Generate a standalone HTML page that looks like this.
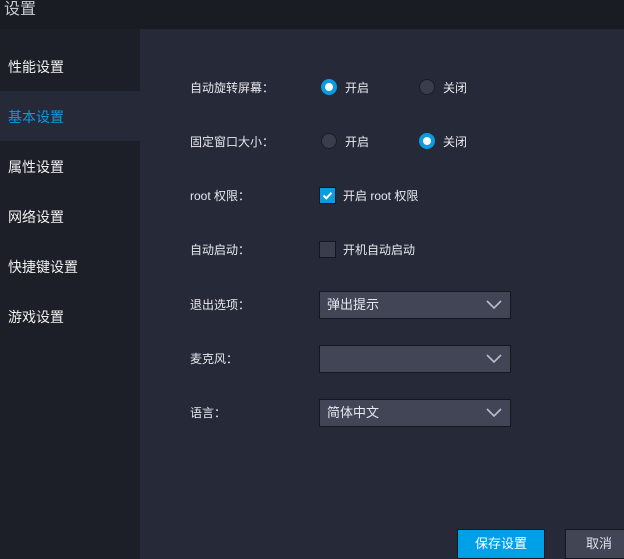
<!DOCTYPE html>
<html><head><meta charset="utf-8"><style>
body{margin:0;width:624px;height:559px;overflow:hidden;background:#262a38;font-family:"Liberation Sans","Noto Sans CJK SC",sans-serif;color:#e6e8ee;font-size:13px;position:relative}
.hdr{position:absolute;left:0;top:0;width:624px;height:29px;background:#1a1c24;color:#c8cad2;font-size:16px;line-height:20px;padding-left:4px;box-sizing:border-box}
.side{position:absolute;left:0;top:29px;width:140px;height:530px;background:#1d1f28}
.item{position:absolute;left:8px;font-size:14px;color:#f0f0f0}
.act{position:absolute;left:0;top:91px;width:140px;height:50px;background:#262a38}
.a{position:absolute;font-size:12px;color:#e8e8ee}
.r{position:absolute;width:16px;height:16px;border-radius:50%;background:#3a3e4c;border:1px solid #1a1c24;box-sizing:border-box}
.r.on{background:#fff;border:4px solid #0a9be0}
.cb{position:absolute;width:17px;height:17px;box-sizing:border-box;border:1px solid #15171e;background:#3a3e4c}
.dd{position:absolute;left:319px;width:192px;height:28px;box-sizing:border-box;border:1px solid #15171e;background:#414556;font-size:13px;line-height:25px;padding-left:7px}
.dd svg{position:absolute;right:8px;top:8px}
.btn{position:absolute;top:529px;height:30px;box-sizing:border-box;border:1px solid #15171e;font-size:13px;line-height:28px;text-align:center}
</style></head><body>
<div class="hdr">设置</div>
<div class="side"></div>
<div class="act"></div>
<div class="item" style="top:57px">性能设置</div>
<div class="item" style="top:107px;color:#0a9be0">基本设置</div>
<div class="item" style="top:157px">属性设置</div>
<div class="item" style="top:207px">网络设置</div>
<div class="item" style="top:257px">快捷键设置</div>
<div class="item" style="top:307px">游戏设置</div>

<div class="a" style="left:190px;top:79px">自动旋转屏幕：</div>
<div class="a" style="left:190px;top:133px">固定窗口大小：</div>
<div class="a" style="left:190px;top:187px">root 权限：</div>
<div class="a" style="left:190px;top:241px">自动启动：</div>
<div class="a" style="left:190px;top:296px">退出选项：</div>
<div class="a" style="left:190px;top:350px">麦克风：</div>
<div class="a" style="left:190px;top:404px">语言：</div>

<div class="r on" style="left:321px;top:79px"></div><div class="a" style="left:345px;top:79px">开启</div>
<div class="r" style="left:419px;top:79px"></div><div class="a" style="left:443px;top:79px">关闭</div>
<div class="r" style="left:321px;top:133px"></div><div class="a" style="left:345px;top:133px">开启</div>
<div class="r on" style="left:419px;top:133px"></div><div class="a" style="left:443px;top:133px">关闭</div>

<div class="cb" style="left:319px;top:187px;background:#0a9be0"><svg width="15" height="15" viewBox="0 0 15 15"><path d="M3.5 7.5l2.8 2.8 5.2-5.5" stroke="#fff" stroke-width="2" fill="none"/></svg></div>
<div class="a" style="left:343px;top:187px">开启 root 权限</div>
<div class="cb" style="left:319px;top:241px"></div>
<div class="a" style="left:343px;top:241px">开机自动启动</div>

<div class="dd" style="top:291px">弹出提示<svg width="16" height="10"><path d="M1 1l7 7 7-7" stroke="#b8bccb" stroke-width="1.6" fill="none"/></svg></div>
<div class="dd" style="top:345px"><svg width="16" height="10"><path d="M1 1l7 7 7-7" stroke="#b8bccb" stroke-width="1.6" fill="none"/></svg></div>
<div class="dd" style="top:399px">简体中文<svg width="16" height="10"><path d="M1 1l7 7 7-7" stroke="#b8bccb" stroke-width="1.6" fill="none"/></svg></div>

<div class="btn" style="left:457px;width:88px;background:#00a0e8;color:#fff">保存设置</div>
<div class="btn" style="left:565px;width:70px;background:#414556;color:#dfe1e8;text-align:left;padding-left:20px">取消</div>
</body></html>
